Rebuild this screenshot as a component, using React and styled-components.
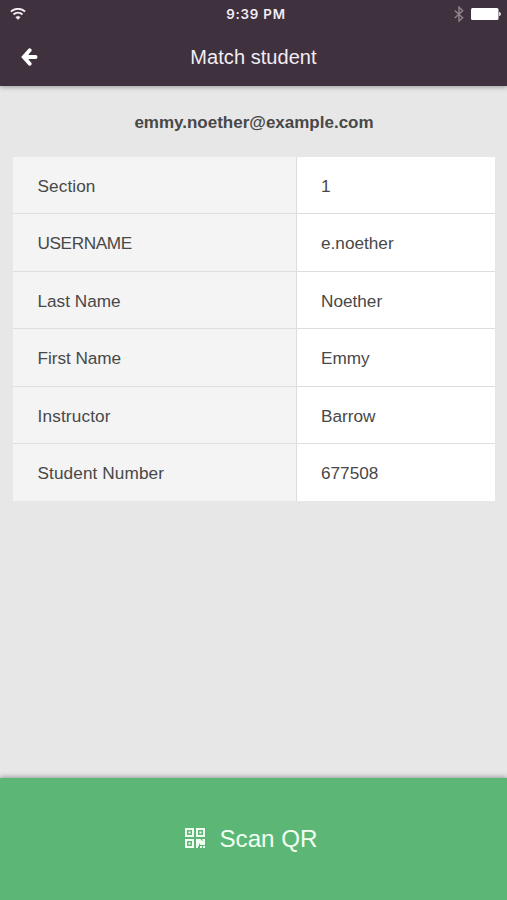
import React from 'react';
import styled, { createGlobalStyle } from 'styled-components';

const GlobalStyle = createGlobalStyle`
  * { box-sizing: border-box; }
  body { margin: 0; background: #e7e7e7; }
`;

const Screen = styled.div`
  display: flex;
  flex-direction: column;
  width: 100%;
  height: 100vh;
  overflow: hidden;
  background: #e7e7e7;
  color: #484848;
  font-family: "Liberation Sans", Arial, sans-serif;
`;

const Header = styled.header`
  flex: none;
  height: 86px;
  background: #3f313e;
  color: #f3edf3;
  box-shadow: 0 1px 5px rgba(0, 0, 0, 0.35);
`;

const StatusBar = styled.div`
  display: grid;
  grid-template-columns: 1fr auto 1fr;
  align-items: center;
  height: 28px;
  padding: 0 6px 0 10px;
`;

const Clock = styled.time`
  font: 600 13.3px/28px Inter, sans-serif;
  letter-spacing: 0.8px;
  padding-left: 1px;
`;

const StatusIcons = styled.div`
  display: flex;
  justify-content: flex-end;
  align-items: center;
  gap: 7px;
`;

const NavBar = styled.div`
  display: grid;
  grid-template-columns: 60px 1fr 60px;
  align-items: center;
  height: 58px;
`;

const BackButton = styled.button`
  display: flex;
  width: 60px;
  height: 58px;
  padding: 20px 0 0 20px;
  border: 0;
  background: none;
`;

const Title = styled.h1`
  margin: 0;
  text-align: center;
  font-size: 20px;
  letter-spacing: 0.05px;
  line-height: 58px;
  font-weight: 400;
`;

const Content = styled.main`
  flex: 1;
  padding: 0 12px 0 13px;
`;

const Email = styled.h2`
  margin: 0;
  height: 71px;
  text-align: center;
  font-size: 17px;
  line-height: 73px;
  font-weight: 700;
`;

const Details = styled.dl`
  margin: 0;
  display: grid;
  grid-template-rows: 57px 58px 57px 58px 57px 56.5px;
  background: #fff;
`;

const DetailRow = styled.div`
  display: grid;
  grid-template-columns: 284px 1fr;
  grid-template-rows: 100%;
  font-size: 17.2px;
  line-height: 58px;
  &:not(:last-child) > * { border-bottom: 1px solid #dedede; }
`;

const Label = styled.dt`
  padding-left: 24.5px;
  background: #f4f4f4;
  border-right: 1px solid #dedede;
  letter-spacing: ${({ $tracking }) => $tracking}px;
`;

const Value = styled.dd`
  margin: 0;
  padding-left: 24px;
`;

const ScanButton = styled.button`
  flex: none;
  display: flex;
  align-items: center;
  justify-content: center;
  gap: 14px;
  height: 122px;
  padding: 0 4px 0 0;
  border: 0;
  background: #5cb776;
  color: #f1fff2;
  font: 24.2px/30px "Liberation Sans", Arial, sans-serif;
  box-shadow: 0 -1px 5px rgba(0, 0, 0, 0.35);
`;

const QrSvg = styled.svg`
  margin-bottom: 2px;
`;

const WifiIcon = () => (
  <svg width="16" height="12" viewBox="0 0 16 12" fill="none" stroke="#f5eef5" strokeWidth="1.8">
    <path d="M.9 3.7a10 10 0 0 1 14.2 0M3.5 6.5a6.4 6.4 0 0 1 9 0" />
    <path d="M8 11.5 5.8 9.2a3.2 3.2 0 0 1 4.4 0Z" fill="#f5eef5" strokeWidth=".5" />
  </svg>
);

const BluetoothIcon = () => (
  <svg width="10" height="17" viewBox="0 0 10 17" fill="none" stroke="#91858f" strokeWidth="1.4">
    <path d="m.7 4.5 8 7.2L5 15V1.2l3.7 3.6-8 7.2" />
  </svg>
);

const BatteryIcon = () => (
  <svg width="30" height="12" viewBox="0 0 30 12" fill="#fff">
    <rect width="27.5" height="12" rx="1.5" />
    <path d="M28.2 4h.4q1.2.4 1.2 2t-1.2 2h-.4z" />
  </svg>
);

const BackIcon = () => (
  <svg width="18" height="18" viewBox="0 0 18 18" fill="none" stroke="#fff" strokeWidth="3.8" strokeLinecap="round" strokeLinejoin="miter">
    <path d="M9.7 2.2 3.7 9l6 6.8M4 9h11.600" />
    <path d="M4 9 8 5v8z" fill="#fff" strokeWidth="1" />
  </svg>
);

const QrIcon = () => (
  <QrSvg width="20" height="20" viewBox="0 0 20 20" fill="currentColor">
    <path fillRule="evenodd" d="M0 0h9v9H0zM2 2v5h5V2zM11 0h9v9h-9zM13 2v5h5V2zM0 11h9v9H0zM2 13v5h5v-5z" />
    <path d="M3.5 3.5h2v2h-2zM14.5 3.5h2v2h-2zM3.5 14.5h2v2h-2zM11 11h4.5l2 2.5V11H20v6h-4.500l-1.500-2v3h-1v2h-2zM15 18h2v2h-2zM18 18h2v2h-2z" />
  </QrSvg>
);

const student = [
  ['Section', '1', 0.1],
  ['USERNAME', 'e.noether', -0.4],
  ['Last Name', 'Noether', 0],
  ['First Name', 'Emmy', -0.05],
  ['Instructor', 'Barrow', 0.15],
  ['Student Number', '677508', 0.1],
];

export default function App() {
  return (
    <Screen>
      <GlobalStyle />
      <Header>
        <StatusBar>
          <WifiIcon />
          <Clock>9:39 PM</Clock>
          <StatusIcons><BluetoothIcon /><BatteryIcon /></StatusIcons>
        </StatusBar>
        <NavBar>
          <BackButton aria-label="Back"><BackIcon /></BackButton>
          <Title>Match student</Title>
        </NavBar>
      </Header>
      <Content>
        <Email>emmy.noether@example.com</Email>
        <Details>
          {student.map(([label, value, tracking]) => (
            <DetailRow key={label}>
              <Label $tracking={tracking}>{label}</Label>
              <Value>{value}</Value>
            </DetailRow>
          ))}
        </Details>
      </Content>
      <ScanButton><QrIcon />Scan QR</ScanButton>
    </Screen>
  );
}
